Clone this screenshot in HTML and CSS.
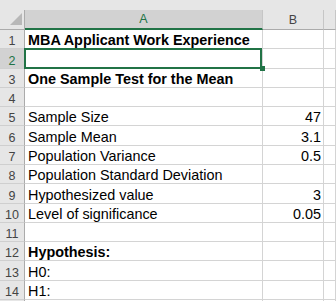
FILE: index.html
```html
<!DOCTYPE html>
<html lang="en">
<head>
    <meta charset="UTF-8">
    <meta name="viewport" content="width=device-width, initial-scale=1.0">
    <title>MBA Applicant Work Experience</title>
    <link rel="stylesheet" href="styles.css">
</head>
<body>

    <div class="sheet">
        <div class="strip"></div>

        <div class="row head-row">
            <div class="corner">
                <svg width="25" height="19" viewBox="0 0 25 19">
                    <polygon points="22,3 22,15 10,15" fill="#b8b8b8"/>
                </svg>
            </div>
            <div class="col-head active">A</div>
            <div class="col-head">B</div>
            <div class="col-head"></div>
        </div>

        <div class="row">
            <div class="row-num">1</div>
            <div class="cell bold">MBA Applicant Work Experience</div>
            <div class="cell value"></div>
            <div class="cell"></div>
        </div>
        <div class="row">
            <div class="row-num active">2</div>
            <div class="cell selected"></div>
            <div class="cell value"></div>
            <div class="cell"></div>
        </div>
        <div class="row">
            <div class="row-num">3</div>
            <div class="cell bold">One Sample Test for the Mean</div>
            <div class="cell value"></div>
            <div class="cell"></div>
        </div>
        <div class="row">
            <div class="row-num">4</div>
            <div class="cell"></div>
            <div class="cell value"></div>
            <div class="cell"></div>
        </div>
        <div class="row">
            <div class="row-num">5</div>
            <div class="cell">Sample Size</div>
            <div class="cell value">47</div>
            <div class="cell"></div>
        </div>
        <div class="row">
            <div class="row-num">6</div>
            <div class="cell">Sample Mean</div>
            <div class="cell value">3.1</div>
            <div class="cell"></div>
        </div>
        <div class="row">
            <div class="row-num">7</div>
            <div class="cell">Population Variance</div>
            <div class="cell value">0.5</div>
            <div class="cell"></div>
        </div>
        <div class="row">
            <div class="row-num">8</div>
            <div class="cell">Population Standard Deviation</div>
            <div class="cell value"></div>
            <div class="cell"></div>
        </div>
        <div class="row">
            <div class="row-num">9</div>
            <div class="cell">Hypothesized value</div>
            <div class="cell value">3</div>
            <div class="cell"></div>
        </div>
        <div class="row">
            <div class="row-num">10</div>
            <div class="cell">Level of significance</div>
            <div class="cell value">0.05</div>
            <div class="cell"></div>
        </div>
        <div class="row">
            <div class="row-num">11</div>
            <div class="cell"></div>
            <div class="cell value"></div>
            <div class="cell"></div>
        </div>
        <div class="row">
            <div class="row-num">12</div>
            <div class="cell bold">Hypothesis:</div>
            <div class="cell value"></div>
            <div class="cell"></div>
        </div>
        <div class="row">
            <div class="row-num">13</div>
            <div class="cell">H0:</div>
            <div class="cell value"></div>
            <div class="cell"></div>
        </div>
        <div class="row">
            <div class="row-num">14</div>
            <div class="cell">H1:</div>
            <div class="cell value"></div>
            <div class="cell"></div>
        </div>
        <div class="row">
            <div class="row-num"></div>
            <div class="cell"></div>
            <div class="cell value"></div>
            <div class="cell"></div>
        </div>
    </div>

</body>
</html>
```

FILE: styles.css
```css
body {
    margin: 0;
    padding: 0;
    background-color: #fff;
    font-family: 'Liberation Sans', Arial, sans-serif;
    color: #000;
    overflow: hidden;
}

.sheet {
    width: 336px;
    height: 301px;
    overflow: hidden;
}

.strip {
    height: 10px;
    background-color: #e6e6e6;
}

.row {
    display: grid;
    grid-template-columns: 25px 238px 61px 1fr;
    height: 19.29px;
}

.head-row {
    height: 20px;
    background-color: #e6e6e6;
}

.corner {
    box-sizing: border-box;
    border-right: 1px solid #ababab;
    border-bottom: 1px solid #ababab;
}

.corner svg {
    display: block;
}

.col-head {
    box-sizing: border-box;
    display: flex;
    align-items: center;
    justify-content: center;
    font-size: 12.5px;
    color: #444;
    border-right: 1px solid #c6c6c6;
    border-bottom: 1px solid #ababab;
}

.col-head.active {
    background-color: #d2d2d2;
    color: #217346;
    border-bottom: 2px solid #217346;
}

.row-num {
    box-sizing: border-box;
    display: flex;
    align-items: flex-end;
    justify-content: center;
    font-size: 12.5px;
    color: #444;
    background-color: #e6e6e6;
    border-right: 1px solid #ababab;
    border-bottom: 1px solid #cfcfcf;
}

.row-num.active {
    background-color: #d2d2d2;
    color: #217346;
}

.cell {
    box-sizing: border-box;
    display: flex;
    align-items: flex-end;
    padding-left: 3px;
    font-size: 14.4px;
    white-space: nowrap;
    border-right: 1px solid #d4d4d4;
    border-bottom: 1px solid #d4d4d4;
}

.cell.bold {
    font-weight: bold;
}

.cell.value {
    justify-content: flex-end;
    padding-left: 0;
    padding-right: 2px;
}

.cell.selected {
    position: relative;
}

.cell.selected::before {
    content: '';
    position: absolute;
    top: -1px;
    left: -1px;
    right: 0;
    bottom: -1px;
    border: 2px solid #217346;
}

.cell.selected::after {
    content: '';
    position: absolute;
    right: -3px;
    bottom: -3px;
    width: 5px;
    height: 5px;
    background-color: #217346;
}
```
